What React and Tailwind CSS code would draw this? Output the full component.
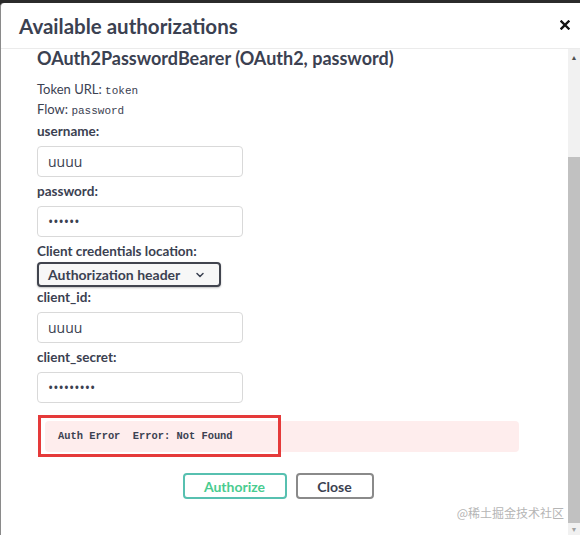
import { ChevronDown } from 'lucide-react'

const SANS = "font-['Lato',sans-serif]"

function Label({ children, className = '' }) {
  return <div className={`text-[13.5px] font-bold leading-[21px] text-[#3b4151] ${className}`}>{children}</div>
}

function TextInput({ value, type = 'text' }) {
  return (
    <input
      type={type}
      defaultValue={value}
      readOnly
      className="mt-[4px] block h-[31px] w-[206px] rounded-[4px] border border-[#d9d9d9] bg-white pl-[10px] font-['Open_Sans',sans-serif] text-[14px] text-[#3b4151] outline-none"
    />
  )
}

export default function App() {
  return (
    <div className={`h-[535px] w-[580px] overflow-hidden bg-[#2b2b2b] pt-[3px] ${SANS}`}>
      <div className="relative flex h-full flex-col rounded-tl-[4px] border-l border-[#8a8a8a] bg-white">
        {/* header */}
        <div className="flex h-[46px] shrink-0 items-center justify-between border-b border-[#ebebeb] pl-[18px] pr-[10px]">
          <h3 className="text-[20.5px] font-bold leading-[28px] text-[#3b4151]">Available authorizations</h3>
          <svg width="10" height="10" viewBox="0 0 10 10" className="mt-[-2px]">
            <path d="M1.5 1.5 L8.5 8.5 M8.5 1.5 L1.5 8.5" stroke="#111" strokeWidth="2.4" strokeLinecap="square" />
          </svg>
        </div>

        {/* body */}
        <div className="flex min-h-0 flex-1">
          <div className="flex-1 overflow-hidden pl-[36px] pr-[49px]">
            <h4 className="text-[18px] font-bold leading-[18px] text-[#3b4151]">
              OAuth2PasswordBearer (OAuth2, password)
            </h4>
            <p className="mt-[12px] h-[20px] text-[13px] leading-[20px] text-[#3b4151]">
              Token URL: <code className="font-['Liberation_Mono',monospace] text-[11px] leading-none">token</code>
            </p>
            <p className="h-[20px] text-[13px] leading-[20px] text-[#3b4151]">
              Flow: <code className="font-['Liberation_Mono',monospace] text-[11px] leading-none">password</code>
            </p>

            <Label className="mt-[2px]">username:</Label>
            <TextInput value="uuuu" />

            <Label className="mt-[4px]">password:</Label>
            <TextInput value="uuuuuu" type="password" />

            <Label className="mt-[4px]">Client credentials location:</Label>
            <div className="flex h-[25px] w-[184px] items-center justify-between rounded-[4px] border-2 border-[#41444e] bg-[#f7f7f7] pl-[9px] pr-[13px] shadow-[0_1px_2px_rgba(0,0,0,0.25)]">
              <span className="whitespace-nowrap text-[14px] font-bold text-[#3b4151]">Authorization header</span>
              <ChevronDown size={12} strokeWidth={3} className="text-[#3b4151]" />
            </div>

            <Label>client_id:</Label>
            <TextInput value="uuuu" />

            <Label className="mt-[4px]">client_secret:</Label>
            <TextInput value="uuuuuuuuu" type="password" />

            {/* error */}
            <div className="relative ml-[8px] mt-[18px]">
              <div className="flex h-[31px] items-center rounded-[4px] bg-[#feeded] pl-[13px]">
                <span className="whitespace-pre font-['Liberation_Mono',monospace] text-[10.4px] font-bold text-[#3b4151]">
                  Auth Error  Error: Not Found
                </span>
              </div>
              <div className="absolute left-[-7px] top-[-6px] h-[42px] w-[243px] border-[3px] border-[#e53a3a]" />
            </div>

            <div className="mt-[21px] flex justify-center gap-[9px]">
              <button className="h-[26px] w-[104px] rounded-[4px] border-2 border-[#57c0b0] text-[14px] font-bold text-[#49cc90]">
                Authorize
              </button>
              <button className="h-[26px] w-[78px] rounded-[4px] border-2 border-[#8a8a8a] text-[14px] font-bold text-[#3b4151]">
                Close
              </button>
            </div>
          </div>

          {/* scrollbar */}
          <div className="flex w-[12px] shrink-0 flex-col bg-[#f1f1f1]">
            <div className="flex h-[17px] items-center justify-center text-[7px] leading-none text-[#505050]">▲</div>
            <div className="h-[91px]" />
            <div className="flex-1 bg-[#c1c1c1]" />
            <div className="flex h-[12px] items-center justify-center text-[7px] leading-none text-[#a3a3a3]">▼</div>
          </div>
        </div>

        {/* watermark */}
        <div className="absolute bottom-[16px] right-[16px] font-['Noto_Sans_CJK_SC',sans-serif] text-[12px] leading-none text-[#b5b5b5]">
          @稀土掘金技术社区
        </div>
      </div>
    </div>
  )
}
